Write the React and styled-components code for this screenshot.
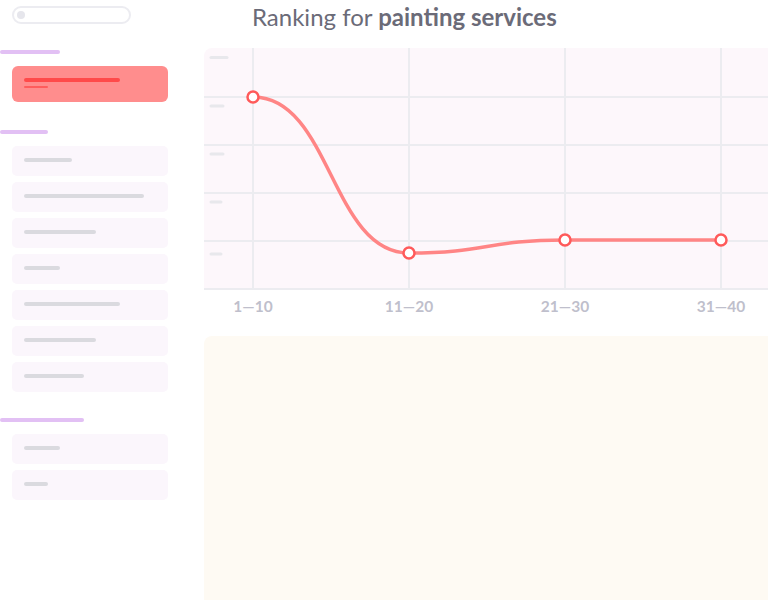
import React from 'react'
import styled, { createGlobalStyle } from 'styled-components'

const GlobalStyle = createGlobalStyle`
  html, body {
    margin: 0;
    padding: 0;
    background: #ffffff;
    font-family: Lato, "Open Sans", sans-serif;
    overflow: hidden;
  }
`

const Layout = styled.div`
  display: grid;
  grid-template-columns: 204px 1fr;
  width: 768px;
  height: 600px;
  overflow: hidden;
`

const Sidebar = styled.aside`
  display: flex;
  flex-direction: column;
  padding-top: 6px;
`

const SearchPill = styled.div`
  box-sizing: border-box;
  margin-left: 12px;
  width: 119px;
  height: 18px;
  border: 2px solid #ececf1;
  border-radius: 9px;
  display: flex;
  align-items: center;
  padding-left: 3px;
`

const SearchDot = styled.span`
  width: 8px;
  height: 8px;
  border-radius: 50%;
  background: #e6e6ec;
`

const SectionLine = styled.div`
  width: ${(p) => p.width}px;
  height: 4px;
  border-radius: 2px;
  background: #e2c0f4;
  margin-top: ${(p) => p.gap}px;
  margin-bottom: 12px;
`

const ItemList = styled.div`
  display: flex;
  flex-direction: column;
  gap: 6px;
`

const Item = styled.div`
  box-sizing: border-box;
  margin-left: 12px;
  width: 156px;
  height: 30px;
  border-radius: 5px;
  background: #fbf6fc;
  padding: 12px 12px 0;
`

const ItemBar = styled.div`
  width: ${(p) => p.width}px;
  height: 4px;
  border-radius: 2px;
  background: #dadadf;
`

const ActiveItem = styled.div`
  box-sizing: border-box;
  margin-left: 12px;
  width: 156px;
  height: 36px;
  border-radius: 6px;
  background: #ff8d8d;
  padding: 12px 12px 0;
  display: flex;
  flex-direction: column;
  gap: 4px;
`

const ActiveBar = styled.div`
  width: 96px;
  height: 4px;
  border-radius: 2px;
  background: #ff4a4a;
`

const ActiveSub = styled.div`
  width: 24px;
  height: 2px;
  border-radius: 1px;
  background: #ff5c5c;
`

const Main = styled.main`
  display: flex;
  flex-direction: column;
  min-width: 0;
`

const Title = styled.h1`
  margin: 0;
  height: 48px;
  padding-left: 48px;
  font-size: 24px;
  line-height: 33px;
  font-weight: 400;
  color: #6b6b78;
  white-space: nowrap;

  b {
    font-weight: 700;
  }
`

const ChartPanel = styled.div`
  height: 242px;
  background: #fdf7fb;
  border-top-left-radius: 8px;
  overflow: hidden;
`

const AxisRow = styled.div`
  display: flex;
  gap: 76px;
  padding-left: 9px;
  height: 46px;
`

const AxisLabel = styled.span`
  width: 80px;
  text-align: center;
  font-size: 15.5px;
  line-height: 32px;
  font-weight: 700;
  color: #bfbfcc;
`

const NotesPanel = styled.div`
  flex: 1;
  background: #fefaf3;
  border-top-left-radius: 8px;
`

const listOne = [48, 120, 72, 36, 96, 72, 60]
const listTwo = [36, 24]
const columns = [49, 205, 361, 517]
const rows = [49, 97, 145, 193, 241]
const ticks = [
  { y: 9.5, w: 16 },
  { y: 58, w: 12 },
  { y: 106, w: 12 },
  { y: 154, w: 10 },
  { y: 206, w: 10 },
]
const points = [
  [49, 49],
  [205, 205],
  [361, 192],
  [517, 192],
]
const labels = ['1—10', '11—20', '21—30', '31—40']

function Chart() {
  return (
    <svg width="564" height="242" viewBox="0 0 564 242">
      {rows.map((y) => (
        <line key={y} x1="0" x2="564" y1={y} y2={y} stroke="#ececf0" strokeWidth="2" />
      ))}
      {columns.map((x) => (
        <line key={x} x1={x} x2={x} y1="0" y2="242" stroke="#ececf0" strokeWidth="2" />
      ))}
      {ticks.map((t) => (
        <line
          key={t.y}
          x1="7"
          x2={7 + t.w}
          y1={t.y}
          y2={t.y}
          stroke="#e8e8ec"
          strokeWidth="3"
          strokeLinecap="round"
        />
      ))}
      <path
        d="M49 49 C127 49 127 205 205 205 C283 205 283 192 361 192 L517 192"
        fill="none"
        stroke="#ff8585"
        strokeWidth="3.5"
        strokeLinecap="round"
      />
      {points.map(([x, y]) => (
        <circle key={x} cx={x} cy={y} r="5.5" fill="#ffffff" stroke="#ff5a5a" strokeWidth="2.5" />
      ))}
    </svg>
  )
}

export default function App() {
  return (
    <>
      <GlobalStyle />
      <Layout>
        <Sidebar>
          <SearchPill>
            <SearchDot />
          </SearchPill>
          <SectionLine width={60} gap={26} />
          <ActiveItem>
            <ActiveBar />
            <ActiveSub />
          </ActiveItem>
          <SectionLine width={48} gap={28} />
          <ItemList>
            {listOne.map((w, i) => (
              <Item key={i}>
                <ItemBar width={w} />
              </Item>
            ))}
          </ItemList>
          <SectionLine width={84} gap={26} />
          <ItemList>
            {listTwo.map((w, i) => (
              <Item key={i}>
                <ItemBar width={w} />
              </Item>
            ))}
          </ItemList>
        </Sidebar>
        <Main>
          <Title>
            Ranking for <b>painting services</b>
          </Title>
          <ChartPanel>
            <Chart />
          </ChartPanel>
          <AxisRow>
            {labels.map((l) => (
              <AxisLabel key={l}>{l}</AxisLabel>
            ))}
          </AxisRow>
          <NotesPanel />
        </Main>
      </Layout>
    </>
  )
}
